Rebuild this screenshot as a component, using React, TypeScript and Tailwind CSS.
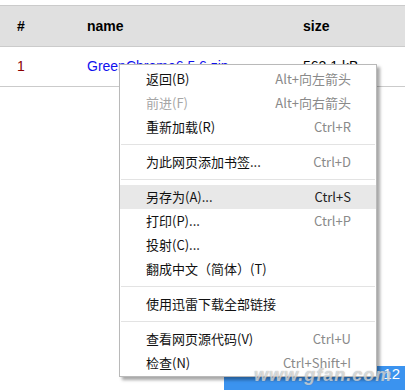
import React from 'react';

type MenuEntry =
  | { type: 'item'; label: string; shortcut?: string; disabled?: boolean; active?: boolean }
  | { type: 'sep' };

const menu: MenuEntry[] = [
  { type: 'item', label: '返回(B)', shortcut: 'Alt+向左箭头' },
  { type: 'item', label: '前进(F)', shortcut: 'Alt+向右箭头', disabled: true },
  { type: 'item', label: '重新加载(R)', shortcut: 'Ctrl+R' },
  { type: 'sep' },
  { type: 'item', label: '为此网页添加书签...', shortcut: 'Ctrl+D' },
  { type: 'sep' },
  { type: 'item', label: '另存为(A)...', shortcut: 'Ctrl+S', active: true },
  { type: 'item', label: '打印(P)...', shortcut: 'Ctrl+P' },
  { type: 'item', label: '投射(C)...' },
  { type: 'item', label: '翻成中文（简体）(T)' },
  { type: 'sep' },
  { type: 'item', label: '使用迅雷下载全部链接' },
  { type: 'sep' },
  { type: 'item', label: '查看网页源代码(V)', shortcut: 'Ctrl+U' },
  { type: 'item', label: '检查(N)', shortcut: 'Ctrl+Shift+I' },
];

const ContextMenu: React.FC = () => (
  <div className="absolute left-[119px] top-[64px] w-[258px] border border-[#b9b9b9] bg-white pt-[2px] pb-[1px] shadow-[3px_3px_3px_rgba(0,0,0,0.35)] font-['Noto_Sans_CJK_SC',sans-serif] text-[13px]">
    {menu.map((entry, i) =>
      entry.type === 'sep' ? (
        <div key={i} className="mx-[1px] my-[5px] h-px bg-[#e3e3e3]" />
      ) : (
        <div
          key={i}
          className={`flex h-[24px] items-center justify-between pl-[26px] pr-[25px] ${
            entry.active ? 'bg-[#e8e8e8]' : ''
          }`}
        >
          <span className={entry.disabled ? 'text-[#a6a6a6]' : 'text-[#111]'}>{entry.label}</span>
          {entry.shortcut && (
            <span className={entry.active ? 'text-[#222]' : 'text-[#8a8a8a]'}>{entry.shortcut}</span>
          )}
        </div>
      )
    )}
  </div>
);

export default function App() {
  return (
    <div className="relative h-[390px] w-[405px] overflow-hidden bg-white font-['Liberation_Sans',Arial,sans-serif] text-[14px]">
      {/* file table */}
      <div className="mt-[5px] border-y border-[#cbcbcb]">
        <div className="flex h-[40px] items-center bg-[#e0e0e0] font-bold text-black">
          <div className="w-[87px] pl-[17px]">#</div>
          <div className="w-[216px]">name</div>
          <div>size</div>
        </div>
        <div className="flex h-[40px] items-center border-t border-[#cbcbcb]">
          <div className="w-[87px] pl-[17px] text-[#8b0000]">1</div>
          <div className="w-[216px] text-[#1010ee]">GreenChrome6.5.6.zip</div>
          <div className="text-black">562.1 kB</div>
        </div>
      </div>

      {/* download button peeking out at bottom right */}
      <div className="absolute left-[224px] top-[366px] flex h-[30px] w-[190px] items-start justify-end bg-[#3b93ef] pr-[14px] text-[15px] leading-[15px] text-white">
        12
      </div>

      <ContextMenu />

      {/* watermark */}
      <div className="pointer-events-none absolute left-[254px] top-[362px] text-[18px] font-bold italic tracking-[1px] text-white/60 [text-shadow:0_0_1px_rgba(80,80,80,0.6)]">
        www.gfan.com
      </div>
    </div>
  );
}
